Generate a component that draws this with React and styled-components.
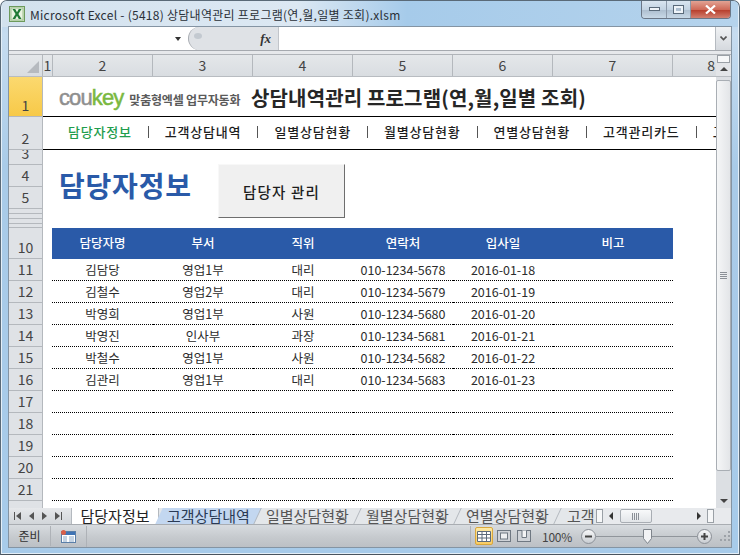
import React from 'react'
import styled, { createGlobalStyle } from 'styled-components'

const KR = `"Noto Sans CJK KR", "Noto Sans", sans-serif`

const GlobalStyle = createGlobalStyle`
  html, body {
    margin: 0;
    padding: 0;
    background: #fff;
  }
  body {
    font-family: ${KR};
    overflow: hidden;
  }
`

const Window = styled.div`
  width: 740px;
  height: 555px;
  box-sizing: border-box;
  display: flex;
  flex-direction: column;
  padding: 0 8px 7px 8px;
  border-radius: 7px 7px 0 0;
  border: 1px solid #5a6a78;
  border-bottom-color: #4a545e;
  background: linear-gradient(180deg, #b9d3ea 0, #c6dcf0 6%, #a9cbe8 30%, #a7cbea 100%);
  box-shadow: inset 0 0 0 1px #e4eff8;
  overflow: hidden;
`

const TitleBar = styled.div`
  height: 26px;
  flex: none;
  margin: 0 -7px 0 -7px;
  padding: 0 7px 0 7px;
  display: flex;
  align-items: center;
  gap: 5px;
  font-size: 12px;
  color: #2a3038;
  background: linear-gradient(90deg, #d3e2ee 0, #dce8f3 40%, #a6cbea 55%, #b5d3ec 100%);
`

const TitleText = styled.span`
  flex: 1;
  white-space: nowrap;
  letter-spacing: 0.27px;
`

const Controls = styled.div`
  display: flex;
  align-self: flex-start;
  height: 17px;
  border: 1px solid #6a7686;
  border-top: none;
  border-radius: 0 0 4px 4px;
  overflow: hidden;
`

const ControlButton = styled.div`
  width: ${p => p.$w}px;
  display: flex;
  align-items: center;
  justify-content: center;
  border-right: 1px solid #8b98a8;
  background: ${p => p.$close
    ? 'linear-gradient(180deg, #e2a394 0, #cf6a58 50%, #b8402e 55%, #d28070 100%)'
    : 'linear-gradient(180deg, #d9e5f0 0, #c3d3e2 50%, #aebfd0 55%, #c8d8e6 100%)'};
  &:last-child {
    border-right: none;
  }
`

const Client = styled.div`
  flex: 1;
  min-height: 0;
  display: flex;
  flex-direction: column;
  box-shadow: 0 0 0 1px #8494a3;
`

const FormulaBar = styled.div`
  height: 23px;
  flex: none;
  display: flex;
  align-items: stretch;
  background: #fff;
  border-bottom: 1px solid #a5a9af;
`

const NameBox = styled.div`
  width: 172px;
  flex: none;
  position: relative;
`

const NameArrow = styled.span`
  position: absolute;
  right: 0;
  top: 10px;
  border: 3.5px solid transparent;
  border-top: 4px solid #333;
  border-bottom: none;
`

const FxButtons = styled.div`
  width: 91px;
  flex: none;
  margin-left: 7px;
  display: flex;
  align-items: center;
  justify-content: space-between;
  padding: 0 7px 0 5px;
  box-sizing: border-box;
  background: #dfe2e6;
  border-radius: 12px 0 0 12px;
  border-left: 1px solid #a7abb1;
  border-right: 1px solid #c2c5ca;
  font: italic bold 13px "Liberation Serif", serif;
  color: #333;
`

const FxDot = styled.span`
  width: 8px;
  height: 6px;
  margin-bottom: 5px;
  border-radius: 50%;
  background: #c3c9d0;
`

const FormulaInput = styled.div`
  flex: 1;
`

const FormulaToggle = styled.div`
  width: 15px;
  flex: none;
  display: flex;
  align-items: center;
  justify-content: center;
  background: linear-gradient(180deg, #f0f2f4, #d5d9de);
  border-left: 1px solid #b5bac0;
`

const Gap = styled.div`
  height: 3px;
  flex: none;
  background: #e6e8eb;
  border-bottom: 1px solid #b0b4b9;
`

const ColumnHeaders = styled.div`
  height: 22px;
  flex: none;
  display: flex;
  background: linear-gradient(180deg, #e4e7ea, #d9dde1);
  border-bottom: 1px solid #b8bcc1;
  box-sizing: border-box;
`

const Corner = styled.div`
  width: 34px;
  flex: none;
  position: relative;
  border-right: 1px solid #b4b8bd;
  box-sizing: border-box;
  &::after {
    content: '';
    position: absolute;
    right: 3px;
    bottom: 3px;
    border-left: 12px solid transparent;
    border-bottom: 12px solid #b6babf;
  }
`

const ColumnHead = styled.div`
  width: ${p => p.$w}px;
  flex: none;
  box-sizing: border-box;
  border-right: ${p => (p.$end ? 'none' : '1px solid #b4b8bd')};
  text-align: ${p => (p.$end ? 'right' : 'center')};
  padding-right: ${p => (p.$end ? 1 : 0)}px;
  font-size: 14px;
  line-height: 20px;
  color: #444;
  overflow: hidden;
`

const ColumnScrollCap = styled.div`
  width: 15px;
  flex: none;
  position: relative;
  display: flex;
  align-items: flex-end;
  justify-content: center;
  padding-bottom: 5px;
  box-sizing: border-box;
  background: #e3e5e8;
  &::before {
    content: '';
    position: absolute;
    left: 1px;
    top: 0;
    width: 13px;
    height: 8px;
    box-sizing: border-box;
    border: 1px solid #9aa0a6;
    background: #f6f7f8;
  }
`

const SheetArea = styled.div`
  flex: 1;
  min-height: 0;
  display: flex;
  background: #fff;
`

const RowHeaders = styled.div`
  width: 34px;
  flex: none;
  display: flex;
  flex-direction: column;
  overflow: hidden;
  background: #dfe2e6;
  border-right: 1px solid #b4b8bd;
  box-sizing: border-box;
`

const RowHead = styled.div`
  height: ${p => p.$h}px;
  flex: none;
  box-sizing: border-box;
  display: flex;
  align-items: flex-end;
  justify-content: center;
  overflow: hidden;
  padding-bottom: 1px;
  font-size: 14px;
  line-height: 20px;
  color: #444;
  background: ${p => (p.$active ? 'linear-gradient(180deg, #fbd96f, #f7c948)' : 'transparent')};
  border-bottom: 1px solid #b4b8bd;
`

const Sheet = styled.div`
  flex: 1;
  min-width: 0;
  overflow: hidden;
  display: flex;
  flex-direction: column;
`

const HeaderRow = styled.div`
  height: 40px;
  flex: none;
  box-sizing: border-box;
  display: flex;
  align-items: center;
  padding: 2px 0 0 16px;
  border-bottom: 1px solid #000;
`

const Logo = styled.div`
  width: 192px;
  flex: none;
  display: flex;
  align-items: baseline;
  font: 22px/1 "Liberation Sans", sans-serif;
  -webkit-text-stroke: 0.5px currentColor;
  color: #8f8f8f;
  letter-spacing: -0.9px;
`

const LogoAccent = styled.span`
  color: #7ab840;
`

const LogoTag = styled.span`
  margin-left: 6px;
  font: 700 12px ${KR};
  -webkit-text-stroke: 0;
  letter-spacing: -0.2px;
  color: #5a5a5a;
  white-space: nowrap;
`

const ProgramTitle = styled.div`
  font-size: 20px;
  font-weight: 700;
  letter-spacing: 0.15px;
  color: #262626;
  white-space: nowrap;
`

const NavRow = styled.div`
  height: 33px;
  flex: none;
  box-sizing: border-box;
  display: flex;
  align-items: center;
  padding: 0 0 3px 25px;
  border-bottom: 1px solid #000;
  white-space: nowrap;
  overflow: hidden;
`

const NavItem = styled.div`
  flex: none;
  font-size: 13px;
  font-weight: 500;
  letter-spacing: 0.8px;
  line-height: 18px;
  color: ${p => (p.$active ? '#1f9d4d' : '#1d1d1d')};
`

const NavBar = styled.div`
  flex: none;
  width: 1px;
  height: 12px;
  margin: 0 16px;
  background: #555;
`

const Heading = styled.div`
  height: 78px;
  flex: none;
  display: flex;
  align-items: flex-start;
`

const HeadingText = styled.div`
  width: 175px;
  box-sizing: border-box;
  padding: 16px 0 0 16px;
  font-size: 28px;
  line-height: 38px;
  font-weight: 700;
  letter-spacing: 0.8px;
  color: #2a5aa8;
  white-space: nowrap;
`

const ManageButton = styled.div`
  width: 127px;
  height: 54px;
  margin-top: 14px;
  box-sizing: border-box;
  display: flex;
  align-items: center;
  justify-content: center;
  font-size: 14.5px;
  letter-spacing: 1.2px;
  font-weight: 500;
  color: #1d1d1d;
  background: #f0f0f0;
  border: 1px solid;
  border-color: #f8f8f8 #6e6e6e #6e6e6e #f8f8f8;
`

const Table = styled.div`
  display: grid;
  grid-template-columns: 101px 100px 100px 100px 100px 120px;
  margin-left: 9px;
  width: 621px;
`

const HeadCell = styled.div`
  height: 31px;
  display: flex;
  align-items: center;
  justify-content: center;
  padding-bottom: 2px;
  box-sizing: border-box;
  font-size: 12.5px;
  font-weight: 500;
  color: #fff;
  background: #2a5aa8;
`

const Cell = styled.div`
  height: 22px;
  box-sizing: border-box;
  display: flex;
  align-items: center;
  justify-content: center;
  font-size: 12.5px;
  color: #2c2c2c;
  border-bottom: 1px dotted #000;
`

const ScrollBar = styled.div`
  width: 15px;
  flex: none;
  display: flex;
  flex-direction: column;
  background: #dcdfe3;
  box-sizing: border-box;
`

const ArrowCell = styled.div`
  height: 14px;
  flex: none;
  display: flex;
  align-items: center;
  justify-content: center;
`

const Thumb = styled.div`
  flex: 1;
  margin: 3px 0 23px;
  display: flex;
  align-items: center;
  justify-content: center;
  border: 1px solid #a9aeb4;
  border-radius: 2px;
  background: linear-gradient(90deg, #f5f6f7, #e3e5e8);
`

const TabStrip = styled.div`
  height: 16px;
  flex: none;
  display: flex;
  align-items: stretch;
  background: #e4e7ea;
  overflow: hidden;
`

const TabNav = styled.div`
  width: 63px;
  flex: none;
  display: flex;
  align-items: center;
  justify-content: space-around;
  padding: 0 6px 0 2px;
  box-sizing: border-box;
  background: linear-gradient(180deg, #e6e8eb, #d2d6da);
  border-right: 1px solid #b4b9bf;
`

const Tab = styled.div`
  flex: none;
  width: ${p => p.$w}px;
  box-sizing: border-box;
  font-size: 15px;
  line-height: 16px;
  text-align: ${p => (p.$state === 'clip' ? 'left' : 'center')};
  padding-left: ${p => (p.$state === 'clip' ? 9 : 0)}px;
  overflow: hidden;
  white-space: nowrap;
  color: ${p => (p.$state === 'active' ? '#222' : p.$state === 'hover' ? '#2a3a55' : '#555')};
  background: ${p => (p.$state === 'active' ? '#fff' : p.$state === 'hover' ? '#c3d7f0' : 'transparent')};
  border-right: ${p => (p.$state === 'clip' ? 'none' : '1px solid #b4b9bf')};
  transform: ${p => (p.$state === 'active' || p.$state === 'clip' ? 'none' : 'skewX(-25deg)')};
`

const TabLabel = styled.span`
  display: inline-block;
  transform: ${p => (p.$state === 'active' || p.$state === 'clip' ? 'none' : 'skewX(25deg)')};
`

const HScroll = styled.div`
  flex: 1;
  display: flex;
  align-items: center;
  background: #e8eaed;
  padding-right: 16px;
  gap: 6px;
`

const HThumb = styled.div`
  width: 32px;
  height: 14px;
  box-sizing: border-box;
  margin: 0 39px 0 1px;
  display: flex;
  align-items: center;
  justify-content: center;
  border: 1px solid #a8adb3;
  border-radius: 2px;
  background: linear-gradient(180deg, #f8f9fa, #e2e5e8);
`

const Splitter = styled.div`
  width: 7px;
  height: 14px;
  flex: none;
  box-sizing: border-box;
  border: 1px solid #9aa0a6;
  background: #f6f7f8;
`

const StatusBar = styled.div`
  height: 23px;
  flex: none;
  display: flex;
  align-items: center;
  font-size: 12px;
  color: #333;
  background: linear-gradient(180deg, #d8dce0, #c6cace 55%, #bcc0c5);
  border-top: 1px solid #a9adb2;
  box-sizing: border-box;
`

const StatusLabel = styled.div`
  width: 41px;
  flex: none;
  text-align: center;
  border-right: 1px solid #aeb2b7;
  line-height: 20px;
`

const MacroSlot = styled.div`
  width: 35px;
  height: 21px;
  flex: none;
  display: flex;
  align-items: center;
  justify-content: center;
  border-right: 1px solid #aeb2b7;
`

const StatusSpacer = styled.div`
  flex: 1;
  height: 100%;
`

const ViewGroup = styled.div`
  display: flex;
  align-items: center;
  gap: 2px;
  padding-left: 4px;
  border-left: 1px solid #aeb2b7;
  height: 20px;
`

const ViewButton = styled.div`
  width: 18px;
  height: 18px;
  box-sizing: border-box;
  display: flex;
  align-items: center;
  justify-content: center;
  border: 1px solid ${p => (p.$on ? '#d9a73c' : 'transparent')};
  border-radius: 2px;
  background: ${p => (p.$on ? 'linear-gradient(180deg, #fde9a4, #f9cc62)' : 'transparent')};
`

const Zoom = styled.div`
  width: 48px;
  text-align: center;
  font-size: 12px;
  letter-spacing: -0.3px;
  color: #444;
`

const RoundButton = styled.div`
  width: 15px;
  height: 15px;
  box-sizing: border-box;
  flex: none;
  display: flex;
  align-items: center;
  justify-content: center;
  border-radius: 50%;
  border: 1px solid #8b9097;
  background: linear-gradient(180deg, #f7f8f9, #c9cdd2);
`

const SliderTrack = styled.div`
  width: 101px;
  height: 1px;
  flex: none;
  background: #90959b;
  position: relative;
`

const SliderKnob = styled.svg`
  position: absolute;
  left: 47px;
  top: -7px;
`

const Grip = styled.svg`
  margin-left: 7px;
  flex: none;
`

const colWidths = [10, 100, 100, 100, 100, 100, 120, 43]
const rowHeights = [40, 33, 15, 22, 22, 5, 5, 5, 4, 31, ...Array(11).fill(22), 22]
const rowLabels = ['1', '2', '3', '4', '5', '', '', '', '', '10', '11', '12', '13', '14', '15', '16', '17', '18', '19', '20', '21', '']

const navItems = ['담당자정보', '고객상담내역', '일별상담현황', '월별상담현황', '연별상담현황', '고객관리카드', '고']

const columns = ['담당자명', '부서', '직위', '연락처', '입사일', '비고']
const staff = [
  ['김담당', '영업1부', '대리', '010-1234-5678', '2016-01-18', ''],
  ['김철수', '영업2부', '대리', '010-1234-5679', '2016-01-19', ''],
  ['박영희', '영업1부', '사원', '010-1234-5680', '2016-01-20', ''],
  ['박영진', '인사부', '과장', '010-1234-5681', '2016-01-21', ''],
  ['박철수', '영업1부', '사원', '010-1234-5682', '2016-01-22', ''],
  ['김관리', '영업1부', '대리', '010-1234-5683', '2016-01-23', ''],
  ...Array(5).fill(['', '', '', '', '', '']),
]

const tabs = [
  { label: '담당자정보', state: 'active', w: 87 },
  { label: '고객상담내역', state: 'hover', w: 99 },
  { label: '일별상담현황', state: 'idle', w: 100 },
  { label: '월별상담현황', state: 'idle', w: 100 },
  { label: '연별상담현황', state: 'idle', w: 100 },
  { label: '고객', state: 'clip', w: 38 },
]

const Tri = ({ dir, color = '#444', size = 4 }) => {
  const points = {
    up: `0,${size} ${size},0 ${size * 2},${size}`,
    down: `0,0 ${size * 2},0 ${size},${size}`,
    left: `${size},0 ${size},${size * 2} 0,${size}`,
    right: `0,0 0,${size * 2} ${size},${size}`,
  }[dir]
  const vertical = dir === 'up' || dir === 'down'
  return (
    <svg width={vertical ? size * 2 : size} height={vertical ? size : size * 2}>
      <polygon points={points} fill={color} />
    </svg>
  )
}

const ExcelIcon = () => (
  <svg width="16" height="16" viewBox="0 0 16 16">
    <rect x="0.5" y="0.5" width="15" height="15" fill="#cfe3c4" stroke="#6d9a5c" />
    <rect x="2" y="2" width="12" height="12" fill="#e9f3e2" stroke="#9dbf8f" />
    <path d="M3.5 3 L6.6 8 L3.5 13 H6.2 L8 9.8 L9.8 13 H12.5 L9.4 8 L12.5 3 H9.8 L8 6.2 L6.2 3 Z" fill="#1f7a35" />
  </svg>
)

const TabNavIcon = ({ kind }) => (
  <svg width="7" height="8" viewBox="0 0 7 8">
    {kind === 'first' && <path d="M0 0h1v8H0z M7 0v8L2 4z" fill="#555" />}
    {kind === 'prev' && <path d="M6 0v8L1 4z" fill="#555" />}
    {kind === 'next' && <path d="M1 0v8l5-4z" fill="#555" />}
    {kind === 'last' && <path d="M0 0v8l5-4z M6 0h1v8H6z" fill="#555" />}
  </svg>
)

const Grips = ({ vertical }) => (
  <svg width={vertical ? 7 : 8} height={vertical ? 8 : 7}>
    {[0, 2, 4, 6].map(n =>
      vertical
        ? <rect key={n} x="0" y={n} width="7" height="1" fill="#8b9097" />
        : <rect key={n} x={n} y="0" width="1" height="7" fill="#8b9097" />,
    )}
  </svg>
)

export default function App() {
  return (
    <Window>
      <GlobalStyle />
      <TitleBar>
        <ExcelIcon />
        <TitleText>Microsoft Excel - (5418) 상담내역관리 프로그램(연,월,일별 조회).xlsm</TitleText>
        <Controls>
          <ControlButton $w={24}>
            <svg width="11" height="5"><rect x="0.5" y="0.5" width="10" height="3" fill="#eef3f8" stroke="#5a6a7a" /></svg>
          </ControlButton>
          <ControlButton $w={23}>
            <svg width="11" height="9"><rect x="0.5" y="0.5" width="10" height="8" fill="#eef3f8" stroke="#5a6a7a" /><rect x="3" y="3" width="5" height="3" fill="#aebfd0" /></svg>
          </ControlButton>
          <ControlButton $close $w={39}>
            <svg width="11" height="9" viewBox="0 0 11 9"><path d="M1 0.5 L10 8.5 M10 0.5 L1 8.5" stroke="#fff" strokeWidth="2.2" /></svg>
          </ControlButton>
        </Controls>
      </TitleBar>

      <Client>
        <FormulaBar>
          <NameBox><NameArrow /></NameBox>
          <FxButtons><FxDot />fx</FxButtons>
          <FormulaInput />
          <FormulaToggle><svg width="7" height="5" viewBox="0 0 7 5"><path d="M0.5 0.5 L3.5 3.5 L6.5 0.5" fill="none" stroke="#555" strokeWidth="1.6" /></svg></FormulaToggle>
        </FormulaBar>
        <Gap />

        <ColumnHeaders>
          <Corner />
          {colWidths.map((w, i) => (
            <ColumnHead key={i} $w={w} $end={i === 7}>{i + 1}</ColumnHead>
          ))}
          <ColumnScrollCap><Tri dir="up" /></ColumnScrollCap>
        </ColumnHeaders>

        <SheetArea>
          <RowHeaders>
            {rowHeights.map((h, i) => (
              <RowHead key={i} $h={h} $active={i === 0}>{rowLabels[i]}</RowHead>
            ))}
          </RowHeaders>
          <Sheet>
            <HeaderRow>
              <Logo>
                cou<LogoAccent>key</LogoAccent>
                <LogoTag>맞춤형엑셀 업무자동화</LogoTag>
              </Logo>
              <ProgramTitle>상담내역관리 프로그램(연,월,일별 조회)</ProgramTitle>
            </HeaderRow>
            <NavRow>
              {navItems.map((item, i) => (
                <React.Fragment key={item}>
                  {i > 0 && <NavBar />}
                  <NavItem $active={i === 0}>{item}</NavItem>
                </React.Fragment>
              ))}
            </NavRow>
            <Heading>
              <HeadingText>담당자정보</HeadingText>
              <ManageButton>담당자 관리</ManageButton>
            </Heading>
            <Table>
              {columns.map(c => <HeadCell key={c}>{c}</HeadCell>)}
              {staff.map((row, r) => row.map((value, c) => <Cell key={`${r}-${c}`}>{value}</Cell>))}
            </Table>
          </Sheet>
          <ScrollBar>
            <Thumb><Grips vertical /></Thumb>
            <ArrowCell><Tri dir="down" /></ArrowCell>
          </ScrollBar>
        </SheetArea>

        <TabStrip>
          <TabNav>
            <TabNavIcon kind="first" />
            <TabNavIcon kind="prev" />
            <TabNavIcon kind="next" />
            <TabNavIcon kind="last" />
          </TabNav>
          {tabs.map(t => (
            <Tab key={t.label} $state={t.state} $w={t.w}>
              <TabLabel $state={t.state}>{t.label}</TabLabel>
            </Tab>
          ))}
          <HScroll>
            <Splitter />
            <Tri dir="left" color="#333" />
            <HThumb><Grips /></HThumb>
            <Tri dir="right" color="#333" />
            <Splitter />
          </HScroll>
        </TabStrip>

        <StatusBar>
          <StatusLabel>준비</StatusLabel>
          <MacroSlot>
            <svg width="15" height="13" viewBox="0 0 15 13">
              <rect x="0.5" y="1.5" width="14" height="11" fill="#fff" stroke="#5b7fa8" />
              <rect x="1" y="2" width="13" height="3" fill="#3f74b5" />
              <path d="M2 7h4M8 7h5M2 9h4M8 9h5M2 11h4M8 11h5" stroke="#8aa8c8" />
              <circle cx="2.5" cy="2.5" r="2.5" fill="#d9604a" />
            </svg>
          </MacroSlot>
          <StatusSpacer />
          <ViewGroup>
            <ViewButton $on>
              <svg width="14" height="11" viewBox="0 0 14 11">
                <path d="M0.5 0.5h13v10h-13z M0.5 3.5h13 M0.5 7h13 M5 0.5v10 M9.5 0.5v10" fill="#fff" stroke="#5d6a7a" />
              </svg>
            </ViewButton>
            <ViewButton>
              <svg width="14" height="12" viewBox="0 0 14 12">
                <rect x="0.5" y="0.5" width="13" height="11" fill="#cfd3d8" stroke="#6f7882" />
                <rect x="3.5" y="3" width="7" height="6" fill="#eef0f2" stroke="#6f7882" />
              </svg>
            </ViewButton>
            <ViewButton>
              <svg width="14" height="12" viewBox="0 0 14 12">
                <rect x="0.5" y="0.5" width="13" height="11" fill="#cfd3d8" stroke="#6f7882" />
                <path d="M5 0.5v7h4.5v-7" fill="#f4f5f6" stroke="#6f7882" />
              </svg>
            </ViewButton>
          </ViewGroup>
          <Zoom>100%</Zoom>
          <RoundButton>
            <svg width="9" height="9"><path d="M1 4.5h7" stroke="#444" strokeWidth="2" /></svg>
          </RoundButton>
          <SliderTrack>
            <SliderKnob width="9" height="15" viewBox="0 0 9 15">
              <path d="M0.5 0.5h8v9l-4 5l-4-5z" fill="#f2f3f5" stroke="#7f858c" />
            </SliderKnob>
          </SliderTrack>
          <RoundButton>
            <svg width="9" height="9"><path d="M1 4.5h7M4.5 1v7" stroke="#444" strokeWidth="2" /></svg>
          </RoundButton>
          <Grip width="12" height="12" viewBox="0 0 12 12">
            <path d="M9 1h2v2H9z M5 5h2v2H5z M9 5h2v2H9z M1 9h2v2H1z M5 9h2v2H5z M9 9h2v2H9z" fill="#9da2a8" />
          </Grip>
        </StatusBar>
      </Client>
    </Window>
  )
}
